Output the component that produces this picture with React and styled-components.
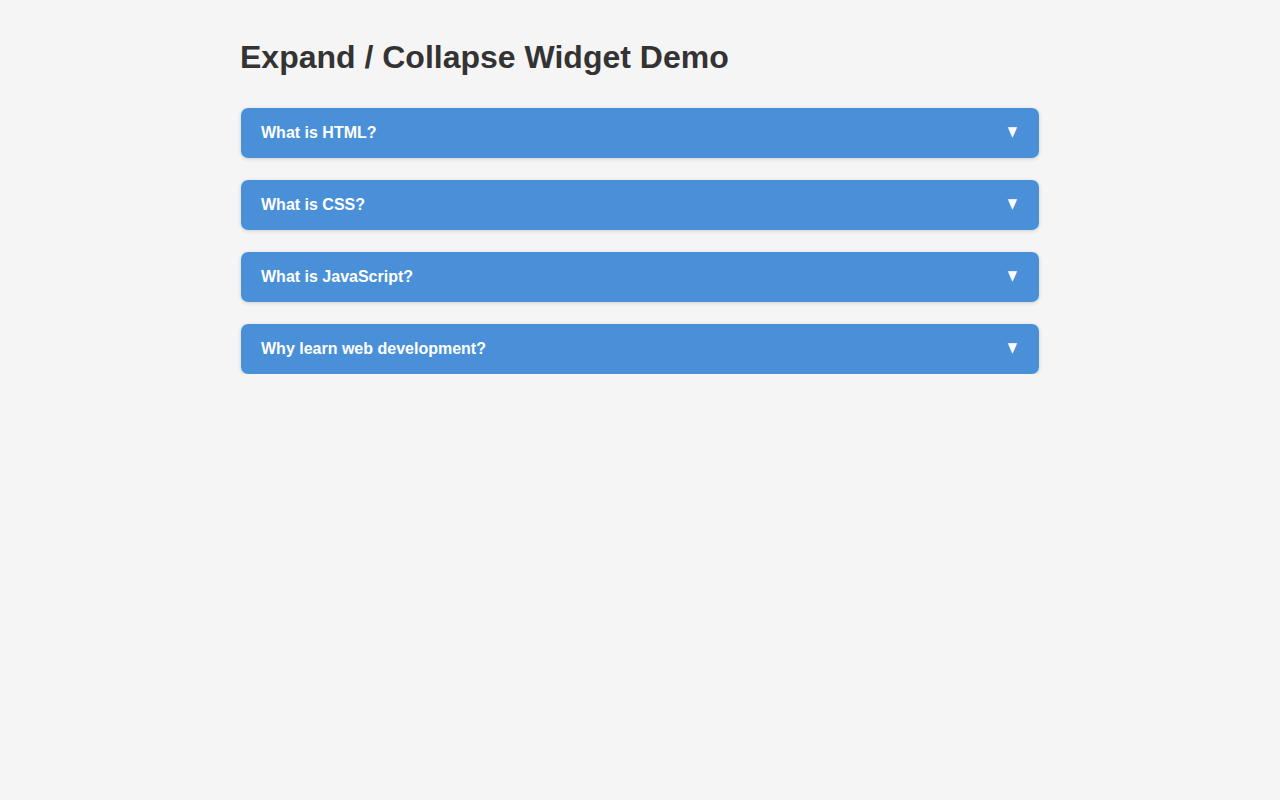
import React from "react";
import styled, { createGlobalStyle } from "styled-components";

const Global = createGlobalStyle`
  html, body { margin: 0; padding: 0; background: #f5f5f5; }
  body { font-family: "Liberation Sans", Arial, Helvetica, sans-serif; color: #333; }
`;

const Container = styled.div`
  max-width: 800px;
  margin: 0 auto;
  padding-top: 39px;
`;

const Title = styled.h1`
  margin: 0 0 32px;
  font-size: 32px;
  line-height: 37px;
  font-weight: bold;
  color: #333;
`;

const List = styled.div`
  display: flex;
  flex-direction: column;
  gap: 22px;
`;

const Item = styled.div`
  margin: 0 1px;
  border-radius: 7px;
  box-shadow: 0 1px 4px rgba(0, 0, 0, 0.15);
  overflow: hidden;
`;

const Header = styled.button`
  width: 100%;
  height: 50px;
  display: flex;
  align-items: center;
  justify-content: space-between;
  padding: 0 22px 0 20px;
  border: none;
  background: #4a90d9;
  color: #fff;
  font-family: inherit;
  font-size: 16px;
  font-weight: bold;
  cursor: pointer;
  text-align: left;
`;

const Arrow = styled.span`
  font-family: "DejaVu Sans", sans-serif;
  font-size: 12px;
  line-height: 1;
  transform: translateY(-1.5px) scale(1, 1.15);
`;

const questions = [
  "What is HTML?",
  "What is CSS?",
  "What is JavaScript?",
  "Why learn web development?",
];

export default function App() {
  return (
    <>
      <Global />
      <Container>
        <Title>Expand / Collapse Widget Demo</Title>
        <List>
          {questions.map((q) => (
            <Item key={q}>
              <Header>
                <span>{q}</span>
                <Arrow>▼</Arrow>
              </Header>
            </Item>
          ))}
        </List>
      </Container>
    </>
  );
}
